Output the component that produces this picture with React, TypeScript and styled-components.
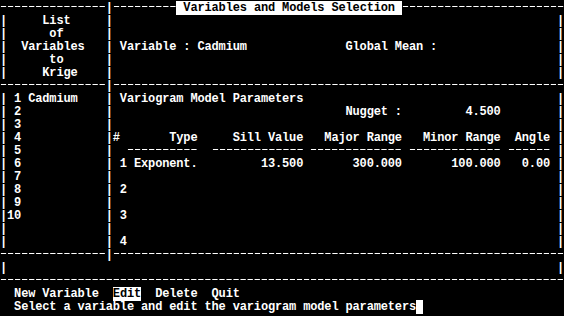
import React from 'react';
import styled, { createGlobalStyle } from 'styled-components';

const GlobalStyle = createGlobalStyle`
  html, body {
    margin: 0;
    padding: 0;
    background: #000;
  }
`;

const Screen = styled.div`
  width: 564px;
  height: 316px;
  box-sizing: border-box;
  padding-top: 2px;
  background: #000;
  color: #fff;
  font-family: "Liberation Mono", "Courier New", monospace;
  font-weight: 700;
  font-size: 12px;
  letter-spacing: -0.15px;
  overflow: hidden;
`;

const Line = styled.div`
  height: 13px;
  line-height: 13px;
  white-space: pre;
`;

// the dashes of the frame are wider and thinner than the font's hyphen,
// so the hyphens stay as text and the stroke is painted under them
const Rule = styled.span`
  color: transparent;
  background-image: linear-gradient(to right, transparent 0 1px, #fff 1px 6px, transparent 6px);
  background-size: 7.05px 1px;
  background-repeat: repeat-x;
  background-position: 0 5px;
`;

const Inverse = styled.span`
  background: #fff;
  color: #000;
`;

const COLS = 80;

// build one 80 column text row: bars at given columns, text at given columns
const row = (bars: number[], texts: [number, string][] = []) => {
  const cells = ' '.repeat(COLS).split('');
  bars.forEach(b => { cells[b] = '|'; });
  texts.forEach(([col, text]) => {
    for (let i = 0; i < text.length; i++) cells[col + i] = text[i];
  });
  return cells.join('');
};

const Text = ({ value }: { value: string }) => (
  <>
    {value.split(/(-+)/).map((part, i) =>
      part.startsWith('-') ? <Rule key={i}>{part}</Rule> : part
    )}
  </>
);

const dashes = (n: number) => '-'.repeat(n);
const rule = dashes(15) + '|' + dashes(64);

const header: [number, string][][] = [
  [[6, 'List']],
  [[7, 'of']],
  [[3, 'Variables'], [17, 'Variable : Cadmium'], [49, 'Global Mean :']],
  [[7, 'to']],
  [[6, 'Krige']],
];

const underline: [number, string][] = [
  [18, dashes(10)],
  [30, dashes(13)],
  [44, dashes(13)],
  [58, dashes(13)],
  [72, dashes(6)],
];

const body: [number, string][][] = [
  [[2, '1'], [4, 'Cadmium'], [17, 'Variogram Model Parameters']],
  [[2, '2'], [49, 'Nugget :'], [66, '4.500']],
  [[2, '3']],
  [[2, '4'], [16, '#'], [24, 'Type'], [33, 'Sill Value'], [46, 'Major Range'], [60, 'Minor Range'], [73, 'Angle']],
  [[2, '5'], ...underline],
  [[2, '6'], [17, '1'], [19, 'Exponent.'], [37, '13.500'], [50, '300.000'], [64, '100.000'], [74, '0.00']],
  [[2, '7']],
  [[2, '8'], [17, '2']],
  [[2, '9']],
  [[1, '10'], [17, '3']],
  [],
  [[17, '4']],
];

const App = () => (
  <>
    <GlobalStyle />
    <Screen>
      <Line>
        <Text value={dashes(15) + '|' + dashes(9)} />
        <Inverse> Variables and Models Selection </Inverse>
        <Text value={dashes(23)} />
      </Line>
      {header.map((texts, i) => (
        <Line key={`h${i}`}>{row([0, 15, 79], texts)}</Line>
      ))}
      <Line><Text value={rule} /></Line>
      {body.map((texts, i) => (
        <Line key={`b${i}`}><Text value={row([0, 15, 79], texts)} /></Line>
      ))}
      <Line><Text value={rule} /></Line>
      <Line>{row([0, 79])}</Line>
      <Line><Text value={dashes(80)} /></Line>
      <Line>
        {'  New Variable  '}
        <Inverse>Edit</Inverse>
        {'  Delete  Quit'}
      </Line>
      <Line>
        {'  Select a variable and edit the variogram model parameters'}
        <Inverse> </Inverse>
      </Line>
    </Screen>
  </>
);

export default App;
